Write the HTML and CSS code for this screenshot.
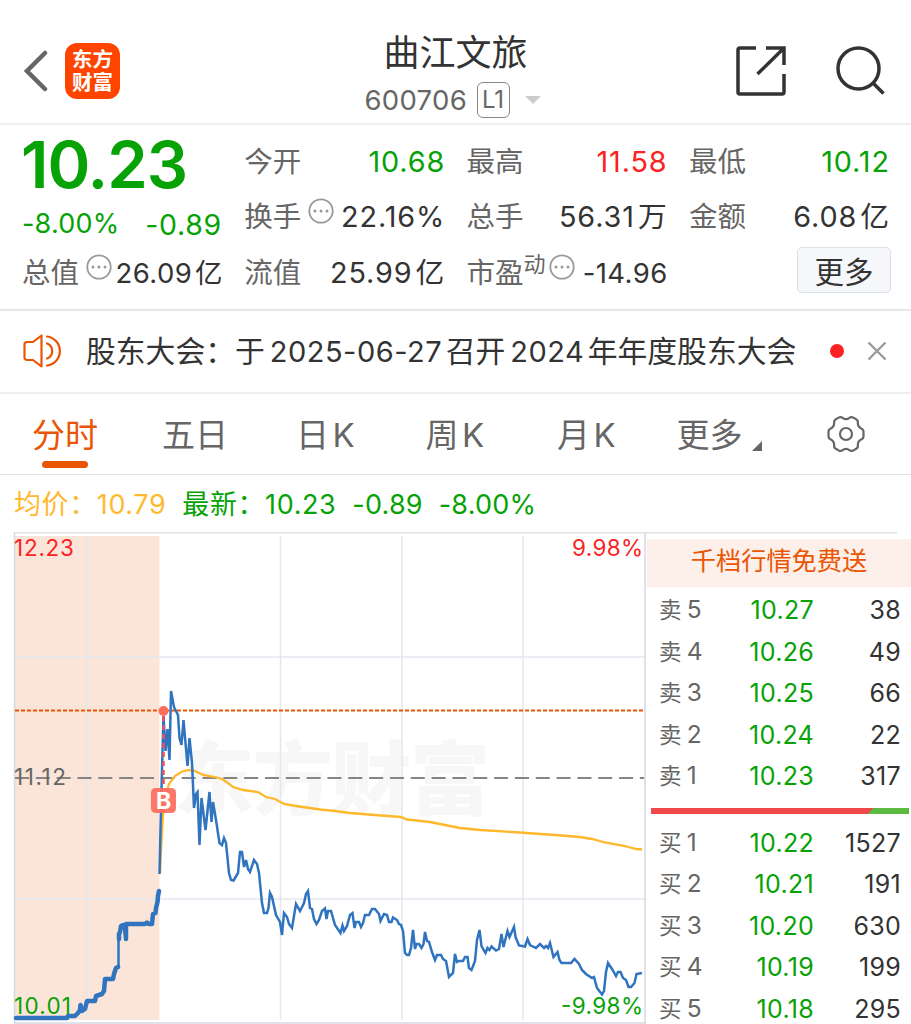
FILE: index.html
```
<!DOCTYPE html>
<html lang="zh-CN">
<head>
    <meta charset="UTF-8" />
    <meta name="viewport" content="width=device-width, initial-scale=1" />
    <title>曲江文旅 600706</title>
    <link rel="stylesheet" href="styles.css">
</head>
<body>
    <header class="header">
        <div class="header-left">
            <svg class="back" viewBox="0 0 26 42" width="26" height="42"><path d="M22 3 4 21l18 18" /></svg>
            <div class="logo"><span>东方</span><span>财富</span></div>
        </div>
        <div class="title">
            <h1>曲江文旅</h1>
            <div class="code">
                <span class="num">600706</span>
                <span class="level">L1</span>
                <i class="caret"></i>
            </div>
        </div>
        <div class="header-right">
            <svg viewBox="0 0 50 50" width="50" height="50">
                <path d="M20 2H4a2 2 0 0 0-2 2v42a2 2 0 0 0 2 2h42a2 2 0 0 0 2-2V28M30 2h18v17M47 3 21.500 28" />
            </svg>
            <svg viewBox="0 0 50 50" width="50" height="50">
                <circle cx="22.500" cy="22.500" r="20.500" /><path d="m37 37 10.500 10.500" />
            </svg>
        </div>
    </header>

    <section class="quote">
        <div class="col">
            <div class="price">10.23</div>
            <div class="change"><span>-8.00%</span><span class="diff">-0.89</span></div>
            <div class="row tight">
                <label>总值</label>
                <svg class="dots" viewBox="0 0 26 26"><circle cx="13" cy="13" r="11.700" /><path d="M7 13h.01M13 13h.01M19 13h.01" /></svg>
                <b>26.09<em>亿</em></b>
            </div>
        </div>
        <div class="col">
            <div class="row"><label>今开</label><b class="green">10.68</b></div>
            <div class="row">
                <label>换手</label>
                <svg class="dots" viewBox="0 0 26 26"><circle cx="13" cy="13" r="11.700" /><path d="M7 13h.01M13 13h.01M19 13h.01" /></svg>
                <b>22.16%</b>
            </div>
            <div class="row"><label>流值</label><b>25.99<em>亿</em></b></div>
        </div>
        <div class="col">
            <div class="row"><label>最高</label><b class="red">11.58</b></div>
            <div class="row"><label>总手</label><b>56.31<em>万</em></b></div>
            <div class="row tight">
                <label>市盈<sup>动</sup></label>
                <svg class="dots pe" viewBox="0 0 26 26"><circle cx="13" cy="13" r="11.700" /><path d="M7 13h.01M13 13h.01M19 13h.01" /></svg>
                <b>-14.96</b>
            </div>
        </div>
        <div class="col">
            <div class="row"><label>最低</label><b class="green">10.12</b></div>
            <div class="row"><label>金额</label><b>6.08<em>亿</em></b></div>
            <div class="row"><button class="more">更多</button></div>
        </div>
    </section>

    <section class="notice">
        <svg class="horn" viewBox="0 0 40 34" width="40" height="34">
            <path d="M18.500 1.500v31L10 26H4a2.500 2.500 0 0 1-2.500-2.500v-13A2.500 2.500 0 0 1 4 8h6z" />
            <path d="M24 9.500a8 8 0 0 1 0 15M24 2.500a14.600 14.600 0 0 1 0 29" />
        </svg>
        <p>股东大会：<span>于</span><i>2025-06-27</i>召开<i>2024</i>年年度股东大会</p>
        <span class="dot"></span>
        <svg class="close" viewBox="0 0 20 20" width="20" height="20"><path d="m1.500 1.500 17 17M18.500 1.500l-17 17" /></svg>
    </section>

    <nav class="tabs">
        <a class="active">分时</a>
        <a>五日</a>
        <a>日<i>K</i></a>
        <a>周<i>K</i></a>
        <a>月<i>K</i></a>
        <a class="drop">更多</a>
        <svg class="gear" viewBox="-20 -20 40 40" width="40" height="40">
            <path d="M-7.300-16.400Q-5-17.600-3.500-16.200Q0-13.600 3.500-16.200Q5-17.600 7.300-16.400L10.300-14.700Q12.300-13.400 11.800-11.200Q11.700-7 15.600-5.200Q17.500-4.500 17.500-2V2Q17.500 4.500 15.600 5.200Q11.700 7 11.800 11.200Q12.300 13.400 10.300 14.700L7.300 16.400Q5 17.600 3.500 16.200Q0 13.600-3.500 16.200Q-5 17.600-7.300 16.400L-10.300 14.700Q-12.300 13.400-11.800 11.200Q-11.700 7-15.600 5.200Q-17.500 4.500-17.500 2V-2Q-17.500-4.500-15.600-5.200Q-11.700-7-11.800-11.200Q-12.300-13.400-10.300-14.700Z" />
            <circle r="6" />
        </svg>
    </nav>

    <div class="legend">
        <span class="avg">均价：10.79</span>
        <span class="last">最新：10.23</span>
        <span class="last delta">-0.89</span>
        <span class="last delta">-8.00%</span>
    </div>

    <main class="board">
        <svg class="chart" viewBox="0 532 646 492" width="646" height="492">
            <rect x="15" y="536" width="144.500" height="484" fill="#fbe5d9" />
            <text class="watermark" x="174" y="808" textLength="316">东方财富</text>
            <g class="grid">
                <path d="M87 536v484M280.500 536v484M402 536v484M523 536v484M15 657h630M15 899h630" />
                <path class="frame" d="M14.500 532v492M645 532v492M14 1023h632" />
            </g>
            <path d="M15 778h629" stroke="#858585" stroke-width="2" stroke-dasharray="14 6.830" />
            <path d="M15 710.500h629" stroke="#ea5504" stroke-width="2" stroke-dasharray="4 2" />

            <!-- average price -->
            <polyline class="line-avg" points="160,873 161,850 163,815 166,795 169,784 175,776 182,771.500 189,770 195,771 203,775 215,777 222,779 228,783 233,787 243,790 258,792 266,797 275,799 284,804 296,806 320,809.500 335,811 350,813 375,815 401,817 407,819.500 430,822 445,825 460,828 480,830 520,832.500 555,835 580,837 592,839 605,842.500 625,846 636,849 642,849.500" />
            <!-- call auction -->
            <polyline class="line-auction" points="16,1018 67,1018 68,1016 75,1016 78,1013 80,1010 80.500,1005 82,1011 85,1009 87,1001 95,1001 96,996 102,994 104,991 105,979 113,979 114,974 116,968 118,967" />
            <polyline class="line-price" points="118.500,968 118.500,940" />
            <polyline class="line-auction" points="119,939 119,934 120,932 121,926 123,925 125,928 126,939 126,924 145,924 147,922.500 149,924 152,924 153,914 155.500,913 156,908 157.500,902 158,896 159,891" />
            <!-- price -->
            <polyline class="line-price" points="159.500,874 160.500,830 162,770 163.500,716 165.500,751 167.500,729 169.500,760 171,691 174,707 178,715 179.500,738 181.500,745 183.500,720 187.500,766 189.500,738 192,763 193,785 194,808 196,794 197.500,792 199.500,845 201.500,798 205.500,830 209.500,792 211.500,822 213,802 216,820 219.500,843 222,845 224,838 226,843 229,873 231,880 233.500,880.500 238,873 240,852 242,852 244,867 246,860 248,869 250,872 254,860 257,864 259,873 262,903 264,913 267,913 268.500,908 270,893 272,897 276,915 280,922 282,935 284,913 287,917 289,924 292,928 296,904 300,911 304,903 306,894 308,891 310,908 312,909 314,919 316.500,924 319,920 322,911 325,908.500 326.500,919 328,911 331,911 333,918 335,925 340.500,933 342.500,925.500 344,931 347,926 350,915 352.500,913 354.500,928 356,922 359,922 361,927 363,923 365,915 369,915 372,909 375,909 379,914 380.500,921 384,914 387,915 389,922 391.500,922 393,917.500 397,920 399,924 401,925 403,931 405,953 407,955 409,955 411,948 413,930 415,949 416.500,944 419,944 421.500,948 423.500,944 425,932 427,941 429,942 432,952 435,960 437,955 441,955 443,959 446,961 449,977 453,973 455,954 457,962 459,961 463,961 465,957 467.500,957 469,968 471.500,970 475,961 477,940 479.500,930 481.500,946 485.500,953 487.500,948 489.500,950 491.500,946.500 496,950.500 499,949 501.500,934 503.500,947 507.500,931 509.500,937 514,927 515.500,937 519,945.500 525,946.500 527.500,939 530,945 536,948 540,944 544,948 546,946 548,948 550,943 553.500,957 557.500,952 559.500,960 561.500,963 571,963 574.500,959 579,964 582,970 586,974 592,978 594,977 597,988 602,994.500 604,991 606,972 608,963 612,969 616,976 618,972 620.500,972 623,978 626,980 628.500,987 631,987 634.500,983 636.500,974 642,973" />

            <!-- buy marker -->
            <path d="M163.500 716v73" stroke="#f0505a" stroke-width="2.500" stroke-dasharray="5 4" />
            <circle cx="163.500" cy="711" r="5" fill="#fd6e5c" />
            <rect x="151" y="788" width="25" height="25" rx="4.500" fill="#fd6e5c" fill-opacity=".93" />
            <text class="mark" x="163.500" y="809" text-anchor="middle">B</text>

            <g class="axis">
                <text x="14" y="556" fill="#fa2222" textLength="60">12.23</text>
                <text x="14" y="785" fill="#666" textLength="52">11.12</text>
                <text x="14" y="1014" fill="#06a206" textLength="57">10.01</text>
                <text x="572" y="556" fill="#fa2222" textLength="71">9.98%</text>
                <text x="561" y="1014" fill="#06a206" textLength="82">-9.98%</text>
            </g>
        </svg>

        <aside class="depth">
            <div class="promo">千档行情免费送</div>
            <ul>
                <li><span>卖<i>5</i></span><b>10.27</b><em>38</em></li>
                <li><span>卖<i>4</i></span><b>10.26</b><em>49</em></li>
                <li><span>卖<i>3</i></span><b>10.25</b><em>66</em></li>
                <li><span>卖<i>2</i></span><b>10.24</b><em>22</em></li>
                <li><span>卖<i>1</i></span><b>10.23</b><em>317</em></li>
            </ul>
            <div class="ratio"></div>
            <ul>
                <li><span>买<i>1</i></span><b>10.22</b><em>1527</em></li>
                <li><span>买<i>2</i></span><b>10.21</b><em>191</em></li>
                <li><span>买<i>3</i></span><b>10.20</b><em>630</em></li>
                <li><span>买<i>4</i></span><b>10.19</b><em>199</em></li>
                <li><span>买<i>5</i></span><b>10.18</b><em>295</em></li>
            </ul>
        </aside>
    </main>
</body>
</html>
```
FILE: styles.css
```
:root {
    --green: #06a206;
    --red: #fa2222;
    --orange: #ea5504;
    --text: #333;
    --muted: #666;
}

* {
    box-sizing: border-box;
}

body {
    width: 911px;
    height: 1024px;
    margin: 0;
    overflow: hidden;
    background: #fff;
    color: var(--text);
    font-family: Inter, "Noto Sans CJK SC", sans-serif;
}

i, em, b {
    font-style: normal;
    font-weight: 400;
}

svg {
    flex: none;
    fill: none;
}

/* header */
.header {
    display: grid;
    grid-template-columns: 1fr 220px 1fr;
    height: 125px;
    border-bottom: 2px solid #eee;
}

.header-left {
    display: flex;
    align-items: center;
    padding: 17px 0 0 23px;
}

.back {
    stroke: #666;
    stroke-width: 4.5;
    stroke-linecap: round;
}

.logo {
    display: flex;
    flex-direction: column;
    align-items: center;
    justify-content: center;
    width: 55px;
    height: 56px;
    margin-left: 16px;
    border-radius: 12px;
    background: #ff4400;
    color: #fff;
    font-size: 20.5px;
    font-weight: 700;
    line-height: 23px;
}

.title {
    text-align: center;
}

.title h1 {
    margin: 30px 0 0;
    font-size: 36px;
    font-weight: 400;
    line-height: 46px;
}

.code {
    display: flex;
    align-items: center;
    height: 48px;
    padding-left: 19px;
    color: var(--muted);
    font-size: 27.5px;
}

.code .num {
    width: 103px;
    text-align: left;
    letter-spacing: 0.3px;
}

.level {
    width: 33px;
    height: 36px;
    margin-left: 9px;
    border: 1.5px solid #888;
    border-radius: 6px;
    font-size: 24px;
    line-height: 33px;
    letter-spacing: -0.2px;
}

.caret {
    margin-left: 15px;
    border: 8px solid transparent;
    border-top-color: #ccc;
    border-bottom: 0;
}

.header-right {
    display: flex;
    align-items: center;
    justify-content: flex-end;
    gap: 50px;
    padding: 17px 25px 0 0;
    stroke: #333;
    stroke-width: 3.5;
}

/* quote */
.quote {
    display: grid;
    grid-template-columns: repeat(4, 200px);
    column-gap: 22.3px;
    height: 186px;
    padding: 8px 0 0 22px;
    border-bottom: 2px solid #e6e6eb;
}

.row {
    display: flex;
    align-items: center;
    height: 55.5px;
    padding-top: 2px;
    font-size: 29px;
    line-height: 42px;
    white-space: nowrap;
}

.row label {
    color: var(--muted);
    font-size: 28.5px;
}

.row b {
    margin: 0 -1px 0 auto;
    font-size: 28.8px;
    letter-spacing: 0.9px;
}

.row em {
    margin-left: 3px;
}

.row b.green {
    color: var(--green);
}

.row b.red {
    color: var(--red);
}

.row sup {
    font-size: 22px;
    line-height: 0;
    vertical-align: 11px;
}

.tight b {
    font-size: 27.5px;
    letter-spacing: 0.4px;
}

.dots {
    width: 26px;
    height: 26px;
    margin: -12px 0 0 7px;
    stroke: #999;
    stroke-width: 1.8;
    stroke-linecap: round;
}

.dots path {
    stroke-width: 3;
}

.dots.pe {
    margin-left: 3px;
}

.price {
    height: 68px;
    margin-left: -1px;
    color: var(--green);
    font-size: 65px;
    font-weight: 600;
    line-height: 64px;
    letter-spacing: -1px;
}

.change {
    display: flex;
    justify-content: space-between;
    height: 43px;
    color: var(--green);
    font-size: 27px;
    line-height: 46px;
    letter-spacing: 0.2px;
}

.diff {
    font-size: 28.5px;
    line-height: 47px;
    letter-spacing: 0.7px;
}

.more {
    width: 94px;
    height: 46px;
    margin: -5px -2px 0 auto;
    padding: 3px 0 0;
    border: 1.5px solid #dbe0e8;
    border-radius: 5px;
    background: #f6f7fa;
    color: var(--text);
    font: 29.5px/40px Inter, "Noto Sans CJK SC", sans-serif;
}

/* notice */
.notice {
    display: flex;
    align-items: center;
    height: 83px;
    padding: 0 0 2px 23px;
    border-bottom: 2px solid #eee;
}

.horn {
    stroke: var(--orange);
    stroke-width: 2.2;
    stroke-linejoin: round;
    stroke-linecap: round;
}

.notice p {
    width: 712px;
    margin: -3px 0 0 23px;
    font-size: 29.8px;
    white-space: nowrap;
}

.notice i {
    margin: 0 3.5px 0 5px;
    font-size: 29px;
    letter-spacing: 0.5px;
}

.dot {
    width: 14px;
    height: 14px;
    margin-left: 32px;
    border-radius: 50%;
    background: var(--red);
}

.close {
    margin-left: 23px;
    stroke: #999;
    stroke-width: 2.3;
}

/* tabs */
.tabs {
    display: grid;
    grid-template-columns: 130px 134px 129.5px 131.5px 119.5px 149px 40px;
    align-items: center;
    height: 81px;
    padding-left: 32px;
    border-bottom: 1px solid #dde1e8;
    color: var(--muted);
    font-size: 33px;
}

.tabs a {
    position: relative;
    margin-top: -3px;
    white-space: nowrap;
}

.tabs i {
    margin-left: 3.5px;
}

.tabs .active {
    color: var(--orange);
}

.tabs .active::after {
    content: "";
    position: absolute;
    left: 10px;
    bottom: -11px;
    width: 46px;
    height: 7px;
    border-radius: 4px;
    background: var(--orange);
}

.tabs .drop::after {
    content: "";
    position: absolute;
    left: 75px;
    bottom: 6px;
    border: 5px solid #666;
    border-top-color: transparent;
    border-left-color: transparent;
}

.gear {
    stroke: #666;
    stroke-width: 2.2;
}

/* chart legend */
.legend {
    display: flex;
    align-items: baseline;
    gap: 16px;
    height: 57px;
    padding: 10px 0 0 14px;
    font-size: 27px;
    letter-spacing: 0.6px;
    line-height: 40px;
    white-space: nowrap;
}

.avg {
    color: #ffb92e;
}

.last {
    color: var(--green);
}

.delta {
    letter-spacing: 0.2px;
}

/* chart + order book */
.board {
    display: flex;
    height: 492px;
    overflow: hidden;
    background: linear-gradient(#dfe1e6, #dfe1e6) 14px 0 / 883px 1.5px no-repeat;
}

.grid {
    stroke: #e3e7ef;
    stroke-width: 1.5;
}

.grid .frame {
    stroke: #d5d9e2;
}

.line-price,
.line-auction {
    stroke: #3074c0;
    stroke-width: 2.5;
}

.line-auction {
    stroke-width: 4.5;
    stroke-linejoin: round;
    stroke-linecap: round;
}

.line-avg {
    stroke: #ffb72b;
    stroke-width: 2.3;
}

.watermark {
    fill: #f7f7f7;
    font-size: 80px;
    font-weight: 900;
}

.mark {
    fill: #fff;
    font-size: 23px;
    font-weight: 700;
}

.axis {
    font-size: 22.5px;
}

.depth {
    width: 265px;
    padding-top: 7px;
}

.promo {
    height: 48px;
    margin-left: 1px;
    background: #fdf0ea;
    color: var(--orange);
    font-size: 25.2px;
    line-height: 45px;
    text-align: center;
}

.depth ul {
    margin: 0;
    padding: 3px 10px 0 13px;
    list-style: none;
}

.depth li {
    display: grid;
    grid-template-columns: 60px 95px 1fr;
    height: 41.5px;
    color: var(--text);
    font-size: 25px;
    line-height: 40.5px;
    letter-spacing: 0.3px;
}

.depth li span {
    color: var(--muted);
    font-size: 22.5px;
    line-height: 39px;
}

.depth li i {
    margin-left: 5px;
    font-size: 24.5px;
}

.depth b,
.depth em {
    text-align: right;
    white-space: nowrap;
}

.depth b {
    color: var(--green);
}

.ratio {
    height: 6px;
    margin: 10px 2px 6px 5px;
    background: linear-gradient(135deg, #ee484a 157px, #5cba40 157.5px);
}
```
